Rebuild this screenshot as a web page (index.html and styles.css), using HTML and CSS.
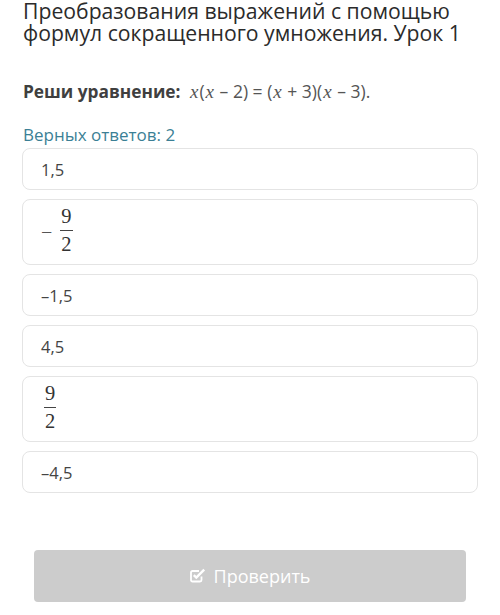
FILE: index.html
```html
<!DOCTYPE html>
<html lang="ru">
<head>
    <meta charset="UTF-8">
    <meta name="viewport" content="width=device-width, initial-scale=1.0">
    <title>Урок 1</title>
    <link rel="stylesheet" href="styles.css">
</head>
<body>

<div class="lesson">
    <h1 class="lesson-title">Преобразования выражений с помощью формул сокращенного умножения. Урок 1</h1>

    <p class="question">
        <b>Реши уравнение:</b>
        <span class="math"><i>x</i>(<i>x</i> – 2) = (<i>x</i> + 3)(<i>x</i> – 3).</span>
    </p>

    <div class="answers-count">Верных ответов: 2</div>

    <div class="options">
        <div class="option">1,5</div>
        <div class="option option-tall">
            <span class="minus">−</span>
            <span class="frac">
                <span class="num">9</span>
                <span class="den">2</span>
            </span>
        </div>
        <div class="option">–1,5</div>
        <div class="option">4,5</div>
        <div class="option option-tall">
            <span class="frac">
                <span class="num">9</span>
                <span class="den">2</span>
            </span>
        </div>
        <div class="option">–4,5</div>
    </div>

    <div class="actions">
        <button class="check-btn" type="button">
            <svg class="check-icon" width="16" height="15" viewBox="0 0 16 15">
                <path d="M11.5 8.5 V12 A1.5 1.5 0 0 1 10 13.5 H2.5 A1.5 1.5 0 0 1 1 12 V4.5 A1.5 1.5 0 0 1 2.5 3 H9" fill="none" stroke="#fff" stroke-width="1.8"/>
                <path d="M3.8 7.2 L6.3 9.6 L14.2 1.6" fill="none" stroke="#fff" stroke-width="2.4"/>
            </svg>
            Проверить
        </button>
    </div>
</div>

</body>
</html>
```

FILE: styles.css
```css
/* Page base */
body {
    margin: 0;
    padding: 0;
    background-color: #ffffff;
    font-family: "Open Sans", "Noto Sans", sans-serif;
    color: #333333;
}

.lesson {
    padding: 0 22px;
}

.lesson-title {
    margin: 0 0 0 1px;
    font-size: 21.2px;
    font-weight: normal;
    line-height: 22px;
    color: #2b2b2b;
}

.question {
    margin: 35px 0 0 1px;
    font-size: 17.3px;
    line-height: 24px;
    color: #444444;
}

.question b {
    font-weight: bold;
    color: #3f3f3f;
}

.math {
    margin-left: 4px;
    font-size: 17.5px;
    color: #555555;
}

.math i {
    font-family: "Liberation Serif", "DejaVu Serif", serif;
    font-size: 19px;
    font-style: italic;
    padding: 0 1px;
}

.answers-count {
    margin: 20px 0 0 1px;
    font-size: 17px;
    line-height: 22px;
    color: #3b7f95;
}

/* Answer cards */
.options {
    display: flex;
    flex-direction: column;
    gap: 9px;
    margin-top: 2px;
}

.option {
    display: flex;
    align-items: center;
    box-sizing: border-box;
    height: 42px;
    padding: 0 18px;
    border: 1px solid #e4e4e4;
    border-radius: 8px;
    font-size: 16.5px;
    color: #444444;
}

.option-tall {
    height: 66px;
}

.minus {
    font-family: "Liberation Serif", "DejaVu Serif", serif;
    font-size: 20px;
    color: #555555;
    margin-right: 5px;
}

.frac {
    display: inline-flex;
    flex-direction: column;
    align-items: center;
    margin-left: 3px;
    margin-top: -4px;
    font-family: "Liberation Serif", "DejaVu Serif", serif;
    font-size: 20.5px;
    color: #333333;
}

.num {
    line-height: 20px;
    padding: 0 1px 4px;
    border-bottom: 1px solid #444444;
}

.den {
    line-height: 20px;
    padding-top: 3px;
}

/* Submit button */
.actions {
    margin-top: 57px;
    padding: 0 12px;
}

.check-btn {
    display: flex;
    align-items: center;
    justify-content: center;
    gap: 8px;
    width: 100%;
    height: 52px;
    border: none;
    border-radius: 4px;
    background-color: #cccccc;
    color: #ffffff;
    font-family: "Open Sans", "Noto Sans", sans-serif;
    font-size: 18px;
}

.check-icon {
    margin-top: -1px;
}
```
